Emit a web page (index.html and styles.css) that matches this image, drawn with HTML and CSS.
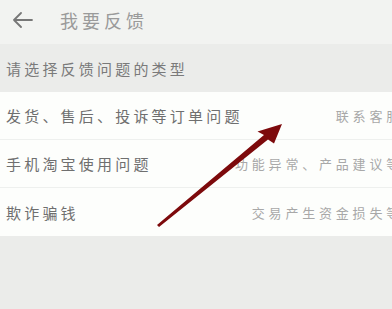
FILE: index.html
```html
<!DOCTYPE html>
<html lang="zh">
<head>
<meta charset="utf-8">
<link rel="stylesheet" href="styles.css">
</head>
<body>
<div class="page">
  <header class="topbar">
    <svg class="back" width="20" height="16" viewBox="0 0 20 16">
      <path d="M1 8 H19 M8 1 L1 8 L8 15" fill="none" stroke="#777" stroke-width="1.8" stroke-linecap="round" stroke-linejoin="round"/>
    </svg>
    <span class="title">我要反馈</span>
  </header>
  <div class="section">请选择反馈问题的类型</div>
  <div class="list">
    <div class="row"><span class="main">发货、售后、投诉等订单问题</span><span class="sub">联系客服</span></div>
    <div class="row"><span class="main">手机淘宝使用问题</span><span class="sub">功能异常、产品建议等</span></div>
    <div class="row last"><span class="main">欺诈骗钱</span><span class="sub">交易产生资金损失等</span></div>
  </div>
  <svg class="pointer" width="392" height="309" viewBox="0 0 392 309">
    <polygon points="157,225 264,135 257.5,131.5 282,124 274,143.5 268,139.5 159,227" fill="#7d0a0c"/>
  </svg>
</div>
</body>
</html>
```
FILE: styles.css
```css
html, body {
  margin: 0;
  padding: 0;
}
body {
  width: 392px;
  height: 309px;
  overflow: hidden;
  background: #ebecea;
  font-family: "Noto Sans CJK SC", "Noto Sans", sans-serif;
}
.page {
  position: relative;
  width: 392px;
  height: 309px;
  overflow: hidden;
}
.topbar {
  height: 44px;
  background: #f2f3f1;
  display: flex;
  align-items: center;
  padding-left: 13px;
  box-sizing: border-box;
}
.back {
  display: block;
  margin-top: -5px;
}
.title {
  margin-left: 27px;
  margin-top: -5px;
  font-size: 18px;
  letter-spacing: 4px;
  color: #9a9a9a;
  line-height: 1;
}
.section {
  height: 48px;
  display: flex;
  align-items: center;
  padding-left: 6px;
  font-size: 15px;
  letter-spacing: 3.2px;
  color: #7a7a7a;
  background: #ebecea;
}
.list {
  background: #fdfefc;
  width: 407px;
}
.row {
  height: 48px;
  display: flex;
  align-items: center;
  justify-content: space-between;
  padding: 0 4px 0 6px;
  box-sizing: border-box;
  border-bottom: 1px solid #eef0ee;
}
.row.last {
  border-bottom: none;
}
.main {
  font-size: 15px;
  letter-spacing: 3.2px;
  color: #6f6f6f;
  white-space: nowrap;
}
.sub {
  font-size: 13px;
  letter-spacing: 3.8px;
  color: #a8a8a8;
  white-space: nowrap;
}
.pointer {
  position: absolute;
  left: 0;
  top: 0;
}
```
